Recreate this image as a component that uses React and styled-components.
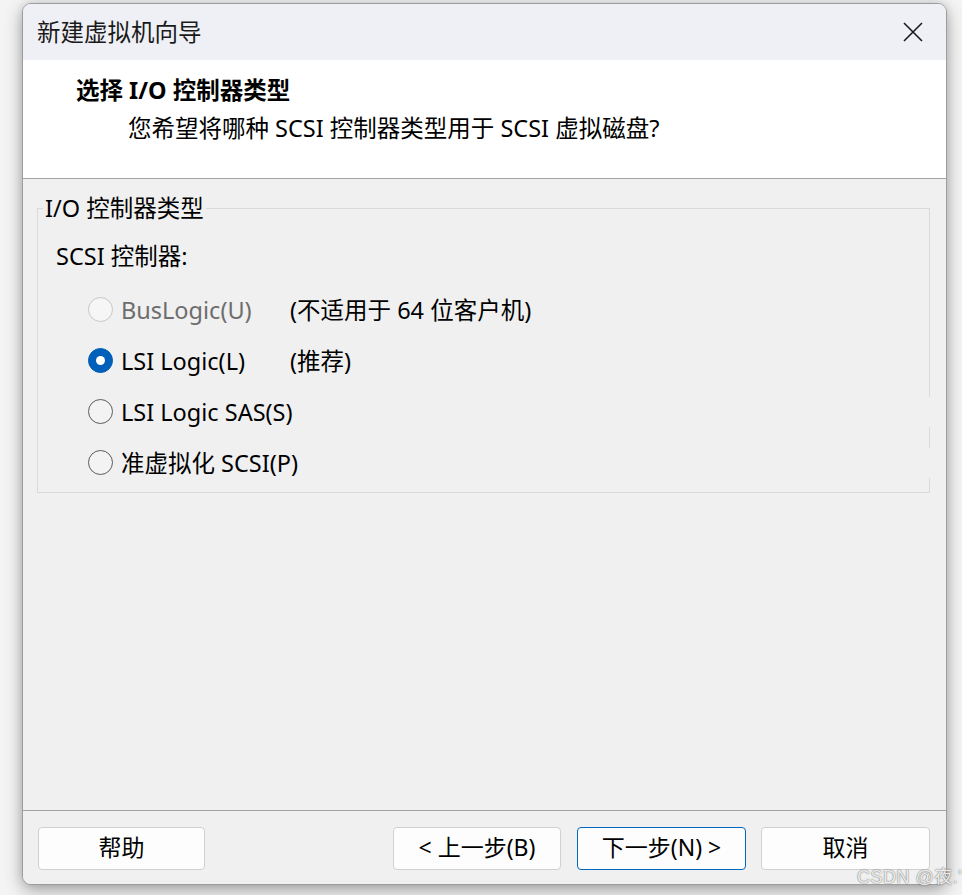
import React from "react";
import styled, { createGlobalStyle } from "styled-components";

const Global = createGlobalStyle`
  html, body { margin: 0; padding: 0; }
  body {
    background: #f4f4f4;
    font-family: "Noto Sans", "Noto Sans CJK SC", sans-serif;
    color: #000;
    width: 962px;
    height: 895px;
    overflow: hidden;
  }
`;

const Stage = styled.div`
  position: relative;
  width: 962px;
  height: 895px;
  padding: 3px 0 0 22px;
  box-sizing: border-box;
`;

const Window = styled.div`
  width: 925px;
  height: 882px;
  box-sizing: border-box;
  border: 1px solid #9d9d9d;
  border-radius: 9px;
  overflow: hidden;
  display: flex;
  flex-direction: column;
  box-shadow: 0 6px 18px rgba(0, 0, 0, 0.3), 0 0 10px rgba(0, 0, 0, 0.12);
  background: #f0f0f0;
`;

const TitleBar = styled.div`
  height: 56px;
  flex: none;
  display: flex;
  align-items: center;
  padding: 0 23px 0 14px;
  background: #eff0f5;
`;

const Title = styled.div`
  font-size: 23.5px;
  line-height: 30px;
  color: #1a1a1a;
`;

const CloseButton = styled.div`
  margin-left: auto;
  width: 20px;
  height: 20px;
  display: flex;
`;

const Header = styled.div`
  height: 119px;
  flex: none;
  box-sizing: border-box;
  background: #ffffff;
  border-bottom: 1px solid #a3a3a3;
  padding-top: 15px;
  display: flex;
  flex-direction: column;
  gap: 8px;
`;

const HeaderTitle = styled.div`
  padding-left: 53px;
  font-size: 23.5px;
  line-height: 30px;
  font-weight: 700;
`;

const HeaderSub = styled.div`
  padding-left: 105px;
  font-size: 23.5px;
  line-height: 30px;
`;

const Content = styled.div`
  flex: 1;
  padding: 14px 16px 0 14px;
  background: #f0f0f0;
`;

const Group = styled.fieldset`
  margin: 0;
  padding: 0 0 4px 0;
  border: 1px solid #dadada;
  min-width: 0;
`;

const Legend = styled.legend`
  margin-left: 5px;
  padding: 0 2px;
  font-size: 23.5px;
  line-height: 31px;
`;

const SubLabel = styled.div`
  margin-top: 17px;
  padding-left: 18px;
  font-size: 23.5px;
  line-height: 30px;
`;

const Rows = styled.div`
  margin-top: 13px;
  display: flex;
  flex-direction: column;
`;

const Row = styled.div`
  height: 51px;
  display: flex;
  align-items: center;
  padding-left: 50px;
`;

const Radio = styled.span`
  flex: none;
  width: 25px;
  height: 25px;
  box-sizing: border-box;
  border-radius: 50%;
  display: flex;
  align-items: center;
  justify-content: center;
  border: 1px solid ${(p) => (p.$disabled ? "#c6c6c6" : p.$checked ? "#005fb8" : "#5c5c5c")};
  background: ${(p) => (p.$checked ? "#005fb8" : p.$disabled ? "#f6f6f6" : "#f3f3f3")};
  &::after {
    content: "";
    display: ${(p) => (p.$checked ? "block" : "none")};
    width: 9px;
    height: 9px;
    border-radius: 50%;
    background: #ffffff;
  }
`;

const Label = styled.span`
  margin-left: 8px;
  font-size: 23.5px;
  line-height: 30px;
  height: 30px;
  color: ${(p) => (p.$disabled ? "#6d6d6d" : "#000")};
  ${(p) => (p.$width ? `width: ${p.$width}px; flex: none;` : "")}
  ${(p) => (p.$cover ? `flex: 1; margin-right: -1px; background: #f0f0f0;` : "")}
`;

const Note = styled.span`
  font-size: 23.5px;
  line-height: 30px;
`;

const Footer = styled.div`
  height: 74px;
  flex: none;
  box-sizing: border-box;
  border-top: 1px solid #a3a3a3;
  padding: 16px 16px 0 15px;
  display: flex;
  align-items: flex-start;
  background: #f0f0f0;
`;

const ButtonGroup = styled.div`
  margin-left: auto;
  display: flex;
  gap: 15px;
`;

const Button = styled.button`
  width: ${(p) => p.$w || 168}px;
  height: 43px;
  box-sizing: border-box;
  border: 1px solid ${(p) => (p.$primary ? "#0067c0" : "#d0d0d0")};
  border-radius: 4px;
  background: #fdfdfd;
  font-family: "Noto Sans", "Noto Sans CJK SC", sans-serif;
  font-size: 23px;
  line-height: 1;
  color: #000;
  padding: 0 0 3px 0;
  margin-right: ${(p) => p.$after || 0}px;
  display: flex;
  align-items: center;
  justify-content: center;
`;

const Watermark = styled.div`
  position: absolute;
  left: 857px;
  top: 866px;
  font-family: "Liberation Sans", "Noto Sans CJK SC", sans-serif;
  font-size: 18px;
  letter-spacing: 0.5px;
  line-height: 22px;
  color: rgba(255, 255, 255, 0.9);
  text-shadow: 0 0 1px rgba(0, 0, 0, 0.6), 0 0 2px rgba(0, 0, 0, 0.25);
  white-space: nowrap;
`;

const options = [
  { label: "BusLogic(U)", note: "(不适用于 64 位客户机)", disabled: true },
  { label: "LSI Logic(L)", note: "(推荐)", checked: true },
  { label: "LSI Logic SAS(S)", cover: true },
  { label: "准虚拟化 SCSI(P)", cover: true },
];

export default function App() {
  return (
    <>
      <Global />
      <Stage>
        <Window>
          <TitleBar>
            <Title>新建虚拟机向导</Title>
            <CloseButton>
              <svg width="20" height="20" viewBox="0 0 20 20">
                <path d="M1 1 L19 19 M19 1 L1 19" stroke="#1a1a1a" strokeWidth="1.6" fill="none" />
              </svg>
            </CloseButton>
          </TitleBar>
          <Header>
            <HeaderTitle>选择 I/O 控制器类型</HeaderTitle>
            <HeaderSub>您希望将哪种 SCSI 控制器类型用于 SCSI 虚拟磁盘?</HeaderSub>
          </Header>
          <Content>
            <Group>
              <Legend>I/O 控制器类型</Legend>
              <SubLabel>SCSI 控制器:</SubLabel>
              <Rows>
                {options.map((o) => (
                  <Row key={o.label}>
                    <Radio $checked={o.checked} $disabled={o.disabled} />
                    <Label
                      $disabled={o.disabled}
                      $width={o.note ? 169 : undefined}
                      $cover={o.cover}
                    >
                      {o.label}
                    </Label>
                    {o.note && <Note>{o.note}</Note>}
                  </Row>
                ))}
              </Rows>
            </Group>
          </Content>
          <Footer>
            <Button $w={167}>帮助</Button>
            <ButtonGroup>
              <Button $w={168} $after={1}>&lt; 上一步(B)</Button>
              <Button $w={169} $primary>下一步(N) &gt;</Button>
              <Button $w={169}>取消</Button>
            </ButtonGroup>
          </Footer>
        </Window>
        <Watermark>CSDN @夜.'</Watermark>
      </Stage>
    </>
  );
}
